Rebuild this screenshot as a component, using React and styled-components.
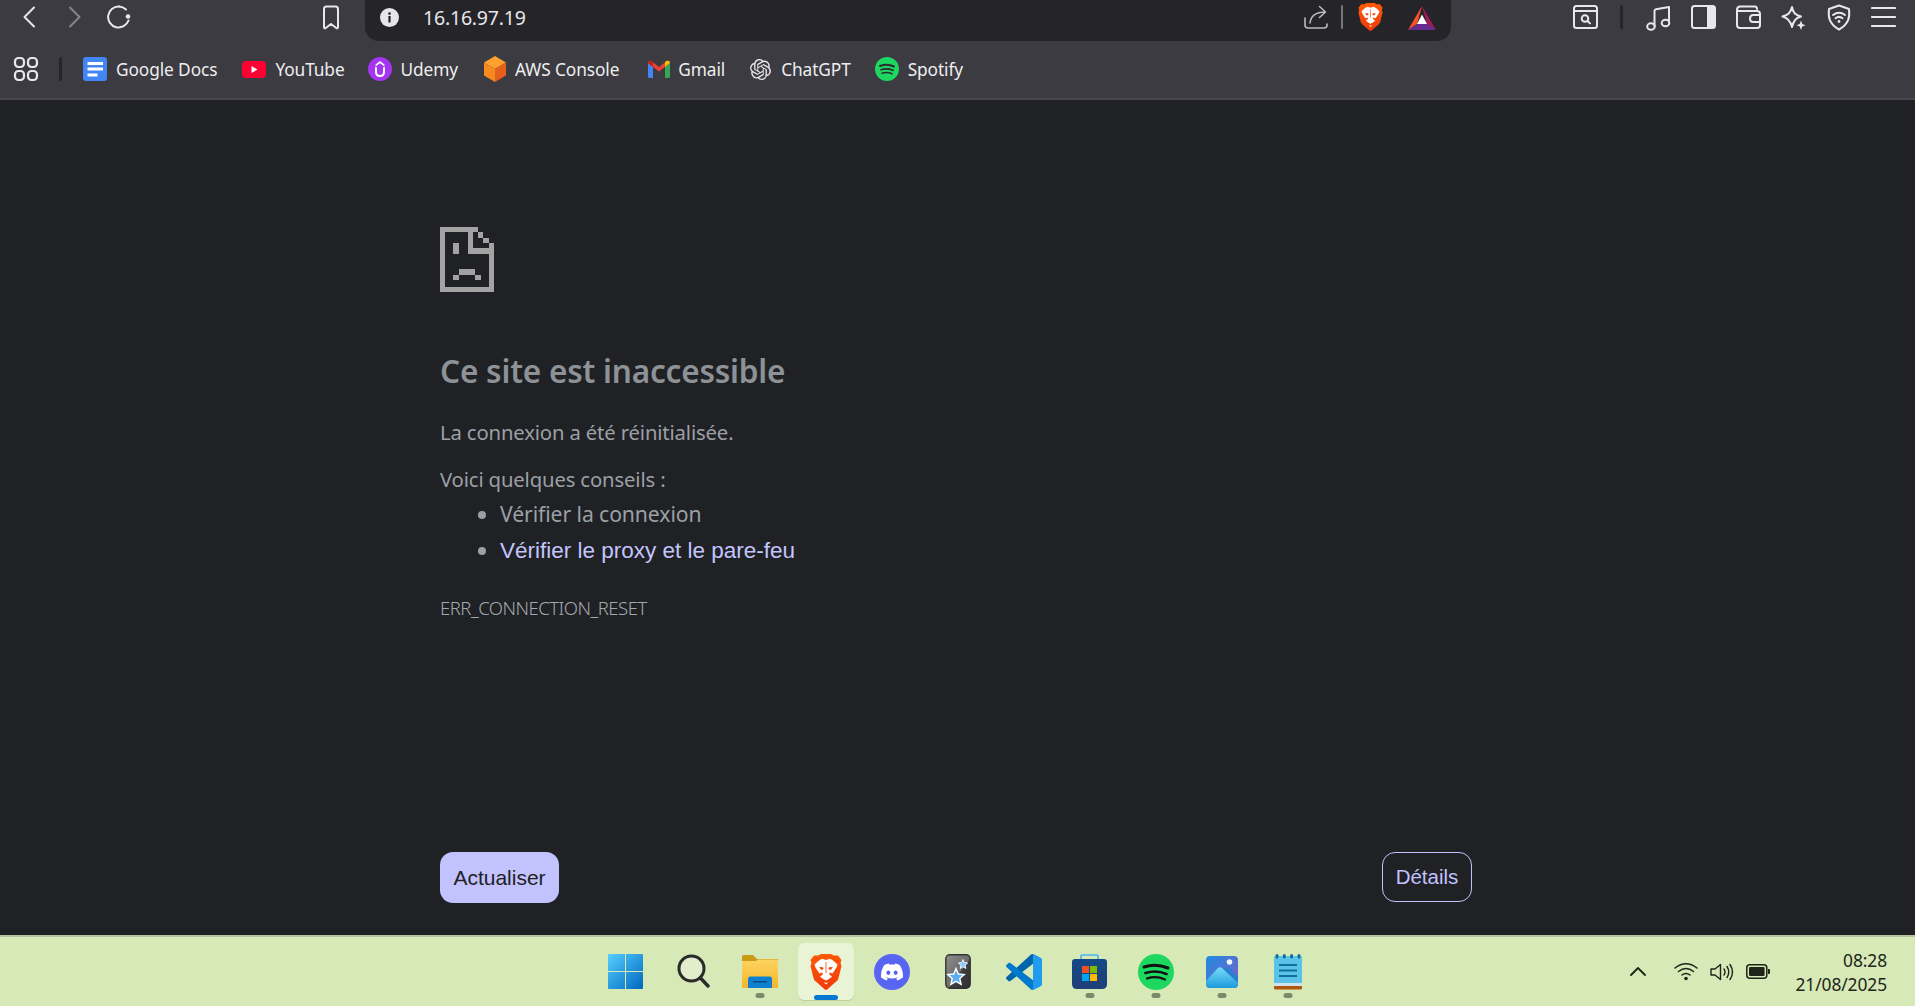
import React from "react";
import styled, { createGlobalStyle } from "styled-components";
import { SiOpenai, SiDiscord } from "react-icons/si";

const Global = createGlobalStyle`
  html, body { margin: 0; padding: 0; background: #202124; }
  * { box-sizing: border-box; }
`;

const UI = `"Noto Sans", "Open Sans", sans-serif`;

const Page = styled.div`
  width: 1915px; height: 1006px; overflow: hidden;
  display: flex; flex-direction: column;
  font-family: ${UI};
`;
const Header = styled.header`
  background: #3b3b41; height: 100px; flex: none;
  border-bottom: 2px solid #47474e;
  display: flex; flex-direction: column;
`;
const TopRow = styled.div`
  height: 41px; display: flex; align-items: center; flex: none;
`;
const Ico = styled.svg`
  flex: none; display: block;
  margin-left: ${p => p.$ml || 0}px;
  margin-top: ${p => p.$mt || 0}px;
  fill: none;
`;
const AddressBar = styled.div`
  margin-left: 25px; width: 1086px; height: 41px; flex: none;
  background: #242429; border-radius: 0 0 14px 14px;
  display: flex; align-items: center;
  padding: 0 15px;
`;
const Url = styled.span`
  margin-left: 24px; color: #e6e6ea; font-size: 19.5px; letter-spacing: -0.2px; margin-top: -7px;
`;
const Spacer = styled.div`flex: 1;`;
const Sep = styled.div`
  flex: none; width: ${p => p.$w || 3}px; height: 24px; border-radius: 2px;
  background: ${p => p.$c || "#25252b"};
  margin-left: ${p => p.$ml || 0}px;
  margin-top: ${p => p.$mt || 0}px;
`;
const BookmarkRow = styled.nav`
  height: 57px; display: flex; align-items: center; flex: none; padding-bottom: 5px; padding-top: 4px;
`;
const Bookmark = styled.a`
  display: flex; align-items: center; margin-left: ${p => p.$ml}px;
  color: #eeeef0; font-size: 17.3px; letter-spacing: -0.1px; white-space: nowrap;
`;
const BookmarkLabel = styled.span`margin-left: ${p => p.$ml}px; `;

const Main = styled.main`
  flex: 1; background: #202124; padding: 127px 0 32px 440px;
  display: flex; flex-direction: column;
  width: 100%;
`;
const Heading = styled.h1`
  margin: 58px 0 0; font-size: 31.5px; line-height: 42px; font-weight: 600; color: #8d9297; letter-spacing: -0.2px;
`;
const Para = styled.p`
  margin: ${p => p.$mt}px 0 0; font-size: 20.3px; line-height: 26px; font-weight: 400; color: #9aa0a6; letter-spacing: -0.15px;
`;
const Tips = styled.ul`
  margin: 4px 0 0; padding: 0 0 0 60px; list-style: disc; color: #9aa0a6; font-size: 21.2px; line-height: 36px; letter-spacing: -0.1px;
  li::marker { color: #9aa0a6; }
`;
const TipLink = styled.a`
  color: #c2c5ff; font-family: "Liberation Sans", Arial, sans-serif; font-size: 22.5px; letter-spacing: 0;
`;
const Code = styled.div`
  margin-top: 27px; font-size: 18.5px; line-height: 24px; font-weight: 300; color: #a3a9ae; letter-spacing: -0.5px;
`;
const Actions = styled.div`
  margin-top: auto; width: 1032px; display: flex; justify-content: space-between; align-items: flex-start;
`;
const Reload = styled.button`
  width: 119px; height: 51px; border: 0; border-radius: 13px; background: #c2c2ff;
  color: #202124; font: 400 21px "Liberation Sans", Arial, sans-serif; padding: 0;
`;
const DetailsBtn = styled.button`
  width: 90px; height: 50px; border: 1px solid #c2c2ff; border-radius: 13px; background: transparent;
  color: #c2c2ff; font: 400 20.5px "Liberation Sans", Arial, sans-serif; padding: 0;
`;
const Taskbar = styled.footer`
  height: 71px; flex: none; background: #d7e9b6; border-top: 2px solid #b6c1a0;
  display: grid; grid-template-columns: 1fr auto 1fr; 
`;
const TaskGroup = styled.div`
  grid-column: 2; display: flex; gap: 10px; padding-top: 6px; align-items: flex-start;
`;
const Tile = styled.div`
  position: relative; width: 56px; height: 57px; border-radius: 6px;
  display: flex; align-items: center; justify-content: center;
  background: ${p => p.$active ? "#e9f4d6" : "transparent"};
  box-shadow: ${p => p.$active ? "0 1px 1px rgba(0,0,0,.12)" : "none"};
`;
const RunDot = styled.span`
  position: absolute; bottom: 2px; left: 50%; transform: translateX(-50%);
  width: 9px; height: 5px; border-radius: 3px; background: #7c8a6c;
`;
const ActiveBar = styled.span`
  position: absolute; bottom: 0; left: 50%; transform: translateX(-50%);
  width: 24px; height: 5px; border-radius: 3px; background: #0078d4;
`;
const Tray = styled.div`
  grid-column: 3; display: flex; align-items: center; justify-content: flex-end; padding-right: 28px;
`;
const Clock = styled.div`
  margin-left: 25px; text-align: right; color: #1e241a; font-size: 17.4px; line-height: 24px; letter-spacing: -0.1px;
`;

const W = "#e8e8ec";
const s = { stroke: W, strokeWidth: 2, strokeLinecap: "round", strokeLinejoin: "round" };

const Brave = ({ size = 32, ml, mt, id = "brv" }) => (
  <Ico width={size} height={size * 36 / 32} viewBox="0 0 32 36" $ml={ml} $mt={mt}>
    <defs>
      <linearGradient id={id} x1="0" y1="0" x2="0" y2="1"><stop offset="0" stopColor="#ff5a05" /><stop offset="1" stopColor="#f03a0c" /></linearGradient>
    </defs>
    <path fill={`url(#${id})`} d="M8 1.5 L11 0 H21 L24 1.5 L28 1.5 L31.5 6 L30.5 9 L31.5 12 L28.5 24 C28 26 27 27 25.5 28 L17.5 35.2 Q16 36.2 14.5 35.2 L6.5 28 C5 27 4 26 3.5 24 L0.5 12 L1.5 9 L0.5 6 L4 1.5Z" />
    <path fill="#fff" d="M9 6.5 L12 4.8 L16 6 L20 4.8 L23 6.5 L27.5 10.5 L26.5 13.5 L22.5 19.5 L20 18.5 L19 20 L22 22.8 L18.5 25.2 L16 26.6 L13.5 25.2 L10 22.8 L13 20 L12 18.5 L9.5 19.5 L5.5 13.5 L4.5 10.5Z" />
    <path fill="#f4470a" d="M9 13 L13 13.2 L13.6 15 L11.4 16Z M23 13 L19 13.2 L18.4 15 L20.6 16Z M15.6 8 H16.4 V19 H15.6Z" />
    <path fill="#f4470a" d="M12.5 27 L16 28.4 L19.5 27 L16 31.8Z" />
    <path fill="#fff" d="M13.6 28 L16 29 L18.4 28 L16 30.6Z" />
  </Ico>
);
const Bat = () => (
  <Ico width={28} height={24} viewBox="0 0 28 24" $ml={25} $mt={-6}>
    <path fill="#ff4f24" d="M14 0 L0 24 L9 18Z" />
    <path fill="#a3195b" d="M14 0 L28 24 L19 18Z" />
    <path fill="#662d91" d="M0 24 H28 L19 18 H9Z" />
    <path fill="#fff" d="M14 8.5 L19 18 H9Z" />
  </Ico>
);
const Back = ({ c = W, ml, d }) => (
  <Ico width={14} height={22} viewBox="0 0 14 22" $ml={ml} $mt={-7}>
    <path d={d} stroke={c} strokeWidth="2" strokeLinecap="round" strokeLinejoin="round" />
  </Ico>
);
const ReloadIcon = () => (
  <Ico width={26} height={24} viewBox="0 0 26 24" $ml={24} $mt={-7}>
    <path {...s} d="M13 1.5 A10.5 10.5 0 1 0 22.5 15.5" />
    <path {...s} d="M13 1.5 A10.5 10.5 0 0 1 20 4.5" />
    <circle cx="22" cy="11.5" r="2.3" fill={W} />
  </Ico>
);
const BookmarkIcon = () => (
  <Ico width={18} height={25} viewBox="0 0 18 25" $ml={190} $mt={-7}>
    <path {...s} d="M2 4 Q2 1.5 4.5 1.5 H13.5 Q16 1.5 16 4 V22 Q16 24 14 22.8 L9 19 L4 22.8 Q2 24 2 22Z" />
  </Ico>
);
const Info = () => (
  <Ico width={19} height={19} viewBox="0 0 19 19" $mt={-7}>
    <circle cx="9.5" cy="9.5" r="9.5" fill="#e6e6ea" />
    <rect x="8.4" y="8" width="2.2" height="6.5" fill="#242429" />
    <circle cx="9.5" cy="5.6" r="1.3" fill="#242429" />
  </Ico>
);
const Share = () => (
  <Ico width={24} height={24} viewBox="0 0 24 24" $mt={-7}>
    <path stroke="#b9b9bf" strokeWidth="1.6" strokeLinecap="round" strokeLinejoin="round" d="M1 13 V20 Q1 23 4 23 H20 Q23 23 23 20 V19" />
    <path stroke="#b9b9bf" strokeWidth="1.6" strokeLinecap="round" strokeLinejoin="round" d="M6 18 C7 10 12 7 21 7 M15.5 1.5 L21.5 7 L15.5 12.5" />
  </Ico>
);
const ReaderIcon = () => (
  <Ico width={25} height={24} viewBox="0 0 25 24" $ml={122} $mt={-7}>
    <rect {...s} x="1" y="1" width="23" height="22" rx="2.5" />
    <path {...s} d="M1 6 H24" />
    <circle cx="12" cy="13.5" r="3.3" stroke={W} strokeWidth="2" />
    <path {...s} d="M14.8 16.2 L17 18.4" />
  </Ico>
);
const Music = () => (
  <Ico width={25} height={26} viewBox="0 0 25 26" $ml={23} $mt={-6}>
    <path {...s} d="M8.5 21 V6 Q8.5 4.5 10 4.2 L23 2 V17" />
    <ellipse {...s} cx="5" cy="21.5" rx="3.8" ry="3.2" />
    <ellipse {...s} cx="19.5" cy="18" rx="3.8" ry="3.2" />
  </Ico>
);
const Sidebar = () => (
  <Ico width={25} height={24} viewBox="0 0 25 24" $ml={20} $mt={-7}>
    <rect {...s} x="1" y="1" width="23" height="22" rx="2.5" />
    <path fill={W} d="M16 1 H21.5 Q24 1 24 3.5 V20.5 Q24 23 21.5 23 H16Z" />
  </Ico>
);
const Wallet = () => (
  <Ico width={25} height={24} viewBox="0 0 25 24" $ml={20} $mt={-7}>
    <path {...s} d="M1 5 Q1 1.5 4 1.5 H19 Q21 1.5 21 4 M1 5 V20 Q1 23 4 23 H21 Q24 23 24 20 V9 Q24 6 21 6 H3 Q1 6 1 4.5" />
    <path {...s} d="M24 10 H17 Q14 10 14 13.5 Q14 17 17 17 H24" />
  </Ico>
);
const Leo = () => (
  <Ico width={25} height={26} viewBox="0 0 25 26" $ml={20} $mt={-6}>
    <path {...s} d="M11 2 C12 8 14.5 10 20 11.5 C14.5 13 12.5 16 11 22 C9.5 16 7 13 1.5 11.5 C7 10 9.5 8 11 2Z" />
    <path fill={W} d="M20 15.5 L21.3 19 L24.5 20.3 L21.3 21.6 L20 25 L18.7 21.6 L15.5 20.3 L18.7 19Z" />
  </Ico>
);
const Vpn = () => (
  <Ico width={24} height={27} viewBox="0 0 24 27" $ml={21} $mt={-7}>
    <path {...s} d="M12 1.5 L22 5 C23 13 22 20 12 25.5 C2 20 1 13 2 5Z" />
    <path {...s} d="M6 11 Q12 6.5 18 11 M8.5 14.2 Q12 11.5 15.5 14.2" />
    <circle cx="12" cy="17.5" r="1.4" fill={W} />
  </Ico>
);
const Menu = () => (
  <Ico width={25} height={22} viewBox="0 0 25 22" $ml={20} $mt={-7}>
    <path stroke={W} strokeWidth="2.2" strokeLinecap="round" d="M1 2 H24 M1 11 H24 M1 20 H24" />
  </Ico>
);
const AppsGrid = () => (
  <Ico width={26} height={26} viewBox="0 0 26 26" $ml={13}>
    <g stroke={W} strokeWidth="2.2">
      <rect x="2" y="2" width="9" height="9" rx="3.5" />
      <rect x="15" y="2" width="9" height="9" rx="3.5" />
      <rect x="2" y="15" width="9" height="9" rx="3.5" />
      <rect x="15" y="15" width="9" height="9" rx="3.5" />
    </g>
  </Ico>
);
const Docs = () => (
  <Ico width={24} height={24} viewBox="0 0 24 24">
    <rect width="24" height="24" rx="3" fill="#4285f4" />
    <path fill="#fff" d="M4.5 5 H20 V8 H4.5Z M4.5 10.5 H20 V13.5 H4.5Z M4.5 16.5 H14.5 V19.5 H4.5Z" />
  </Ico>
);
const YouTube = () => (
  <Ico width={24} height={17} viewBox="0 0 24 17">
    <rect width="24" height="17" rx="4" fill="#ff0033" />
    <path fill="#fff" d="M9.5 5 L15.5 8.5 L9.5 12Z" />
  </Ico>
);
const Udemy = () => (
  <Ico width={24} height={24} viewBox="0 0 24 24">
    <circle cx="12" cy="12" r="12" fill="#a435f0" />
    <path stroke="#fff" strokeWidth="2" strokeLinecap="round" fill="none" d="M8 11 V15 Q8 19 12 19 Q16 19 16 15 V11" />
    <path fill="#fff" d="M12 4 L16.5 7.6 V9.4 L12 6.2 L7.5 9.4 V7.6Z" />
  </Ico>
);
const Aws = () => (
  <Ico width={24} height={26} viewBox="0 0 24 26">
    <path fill="#ffa02e" d="M12 0 L23 6.5 L12 13 L1 6.5Z" />
    <path fill="#f58a1f" d="M1 6.5 L12 13 V26 L1 19.5Z" />
    <path fill="#e5601c" d="M23 6.5 L12 13 V26 L23 19.5Z" />
  </Ico>
);
const Gmail = () => (
  <Ico width={22} height={18} viewBox="0 0 22 18">
    <path fill="#4285f4" d="M0 3 V16.5 Q0 18 1.5 18 H5 V7Z" />
    <path fill="#34a853" d="M22 3 V16.5 Q22 18 20.5 18 H17 V7Z" />
    <path fill="#ea4335" d="M0 3 Q0 0 3 0.8 L11 7 L19 0.8 L17 7 L11 11.5 L5 7 L0 3Z" />
    <path fill="#fbbc04" d="M17 7 V1.8 L19 0.8 Q22 0 22 3Z" />
    <path fill="#c5221f" d="M0 3 Q0 0 3 0.8 L5 2.2 V7Z" />
  </Ico>
);

const WinLogo = () => (
  <Ico width={35} height={35} viewBox="0 0 35 35" style={{ marginRight: 4 }}>
    <defs>
      <linearGradient id="win" x1="0" y1="0" x2="1" y2="1"><stop offset="0" stopColor="#55d0ff" /><stop offset="1" stopColor="#0067bf" /></linearGradient>
    </defs>
    <path fill="url(#win)" d="M1 0 H17 V17 H0 V1 Q0 0 1 0Z M18 0 H34 Q35 0 35 1 V17 H18Z M0 18 H17 V35 H1 Q0 35 0 34Z M18 18 H35 V34 Q35 35 34 35 H18Z" />
  </Ico>
);
const SearchIcon = () => (
  <Ico width={33} height={35} viewBox="0 0 33 35">
    <circle cx="14.5" cy="14.5" r="12.5" stroke="#2b2b2b" strokeWidth="3" fill="#e2edcc" />
    <path stroke="#2b2b2b" strokeWidth="3.4" strokeLinecap="round" d="M23.5 24 L31 32" />
  </Ico>
);
const Folder = () => (
  <Ico width={36} height={33} viewBox="0 0 36 33">
    <defs>
      <linearGradient id="fld" x1="0" y1="0" x2="0" y2="1"><stop offset="0" stopColor="#fcd462" /><stop offset="1" stopColor="#f6b52a" /></linearGradient>
    </defs>
    <path fill="#cb9a14" d="M0 2 Q0 0 2 0 H11 L15 4 H36 V12 H0Z" />
    <path fill="url(#fld)" d="M0 6 H14 L16 4.5 H35 Q36 4.5 36 6 V32 Q36 33 35 33 H1 Q0 33 0 32Z" />
    <path fill="#0f7fcf" d="M6 33 V24 Q6 21.5 8.5 21.5 H27.5 Q30 21.5 30 24 V33Z" />
    <rect x="11" y="26" width="14" height="1.6" fill="#0b4f8c" />
  </Ico>
);
const DiscordIcon = () => (
  <Ico width={36} height={36} viewBox="0 0 36 36">
    <circle cx="18" cy="18" r="18" fill="#5865f2" />
    <SiDiscord x="7" y="7" size="22" color="#fff" style={{ fill: "#fff" }} />
  </Ico>
);
const Anki = () => (
  <Ico width={26} height={35} viewBox="0 0 26 35">
    <defs>
      <linearGradient id="ank" x1="0" y1="0" x2="1" y2="1"><stop offset="0" stopColor="#8f8f8f" /><stop offset=".55" stopColor="#6b6b6b" /><stop offset=".56" stopColor="#3f3f3f" /><stop offset="1" stopColor="#2e2e2e" /></linearGradient>
    </defs>
    <rect x=".8" y=".8" width="24.4" height="33.4" rx="4" fill="url(#ank)" stroke="#333" strokeWidth="1.4" />
    <path fill="#8cc7f7" stroke="#e8f4ff" strokeWidth="1" d="M18 5.5 L19.3 8.6 L22.6 9 L20.1 11.2 L20.9 14.5 L18 12.7 L15.1 14.5 L15.9 11.2 L13.4 9 L16.7 8.6Z" />
    <path fill="#5aaef0" stroke="#fff" strokeWidth="1.4" d="M11 14.5 L13.3 20 L19.2 20.6 L14.8 24.5 L16.1 30.4 L11 27.3 L5.9 30.4 L7.2 24.5 L2.8 20.6 L8.7 20Z" />
  </Ico>
);
const VsCode = () => (
  <Ico width={36} height={36} viewBox="0 0 100 100">
    <path fill="#0065a9" d="M96.46 10.8 L75.86 .9 C73.47 -.25 70.62 .24 68.75 2.11 L1.3 63.6 C-.51 65.25 -.51 68.1 1.31 69.75 L6.82 74.76 C8.31 76.11 10.55 76.21 12.15 75 L93.36 13.37 C96.07 11.31 100 13.25 100 16.67 V16.43 C100 14.03 98.62 11.84 96.46 10.8Z" />
    <path fill="#007acc" d="M96.46 89.2 L75.86 99.1 C73.47 100.25 70.62 99.76 68.75 97.89 L1.3 36.4 C-.51 34.75 -.51 31.9 1.31 30.25 L6.82 25.24 C8.31 23.89 10.55 23.79 12.15 25 L93.36 86.63 C96.07 88.69 100 86.75 100 83.33 V83.57 C100 85.97 98.62 88.16 96.46 89.2Z" />
    <path fill="#1f9cf0" d="M75.86 99.13 C73.47 100.28 70.62 99.79 68.75 97.92 C71.06 100.23 75 98.59 75 95.33 V4.67 C75 1.41 71.06 -.23 68.75 2.08 C70.62 .21 73.47 -.28 75.86 .87 L96.46 10.78 C98.62 11.82 100 14.01 100 16.41 V83.59 C100 85.99 98.62 88.18 96.46 89.22Z" />
  </Ico>
);
const Store = () => (
  <Ico width={35} height={35} viewBox="0 0 35 35">
    <defs>
      <linearGradient id="sto" x1="0" y1="0" x2="0" y2="1"><stop offset="0" stopColor="#124a86" /><stop offset="1" stopColor="#1f3f78" /></linearGradient>
    </defs>
    <path stroke="#47b6ee" strokeWidth="1.6" d="M9 7 V2 Q9 1 10 1 H25 Q26 1 26 2 V7" />
    <path fill="url(#sto)" d="M0 8 Q0 5 3 5 H32 Q35 5 35 8 V30 Q35 35 30 35 H5 Q0 35 0 30Z" />
    <rect x="10" y="12" width="7" height="7" fill="#f25022" />
    <rect x="18" y="12" width="7" height="7" fill="#7fba00" />
    <rect x="10" y="20" width="7" height="7" fill="#00a4ef" />
    <rect x="18" y="20" width="7" height="7" fill="#ffb900" />
  </Ico>
);
const SpotifyIcon = () => (
  <Ico width={36} height={36} viewBox="0 0 36 36">
    <circle cx="18" cy="18" r="18" fill="#1ed760" />
    <path stroke="#111" strokeWidth="3" strokeLinecap="round" d="M6 13 Q18 9 30 14" />
    <path stroke="#111" strokeWidth="2.6" strokeLinecap="round" d="M7.5 19 Q18 15.5 28.5 20" />
    <path stroke="#111" strokeWidth="2.2" strokeLinecap="round" d="M9 24.5 Q18 21.5 27 25.5" />
  </Ico>
);
const Photos = () => (
  <Ico width={32} height={32} viewBox="0 0 32 32">
    <defs>
      <linearGradient id="pho" x1="0" y1="0" x2="1" y2="1"><stop offset="0" stopColor="#1f8ce0" /><stop offset="1" stopColor="#7f5cc9" /></linearGradient>
      <linearGradient id="mtn" x1="0" y1="0" x2="0" y2="1"><stop offset="0" stopColor="#7adcf8" /><stop offset="1" stopColor="#1d9bdc" /></linearGradient>
    </defs>
    <rect width="32" height="32" rx="4" fill="url(#pho)" />
    <circle cx="23.5" cy="6" r="2.8" fill="#f2f6ff" />
    <path fill="#2a7fd0" d="M17 13 L22 11.5 Q23 11.5 24 12.5 L32 21 V30Z" />
    <path fill="url(#mtn)" d="M0 25 L12 12 Q14 10.5 16 12 L32 27 V28 Q32 32 28 32 H4 Q0 32 0 28Z" />
  </Ico>
);
const Notepad = () => (
  <Ico width={28} height={36} viewBox="0 0 28 36">
    <rect y="2" width="28" height="31" rx="2" fill="#5cc3e8" />
    <rect y="29" width="28" height="3" fill="#cfe4ea" />
    <path fill="#b0560f" d="M0 32 H28 V34 Q28 35.5 26.5 35.5 H1.5 Q0 35.5 0 34Z" />
    <path stroke="#0f6f9f" strokeWidth="3" strokeLinecap="round" d="M3 1.5 V3 M10.3 1.5 V3 M17.6 1.5 V3 M25 1.5 V3" />
    <path stroke="#0f6f9f" strokeWidth="1.8" d="M5 11 H23 M5 16.5 H23 M5 22 H23" />
  </Ico>
);

const SadPage = () => (
  <Ico width={54} height={65} viewBox="30 20 162 195" shapeRendering="crispEdges">
    <path fill="#a3a3a3" d="M30 20 H145 V36 H46 V199 H176 V100 H113 V36 H130 V84 H192 V215 H30Z
      M145 36 H160 V52 H145Z M160 52 H176 V67 H160Z M176 67 H192 V84 H176Z
      M70 67 H87 V100 H70Z
      M87 147 H135 V163 H87Z M70 163 H87 V178 H70Z M135 163 H152 V178 H135Z" />
  </Ico>
);

const bookmarks = [
  { label: "Google Docs", ml: 21, lm: 9, Icon: Docs },
  { label: "YouTube", ml: 25, lm: 9, Icon: YouTube },
  { label: "Udemy", ml: 23, lm: 9, Icon: Udemy },
  { label: "AWS Console", ml: 25, lm: 8, Icon: Aws },
  { label: "Gmail", ml: 29, lm: 8, Icon: Gmail },
  { label: "ChatGPT", ml: 25, lm: 10, Icon: () => <Ico as={SiOpenai} size={21} style={{ color: "#e8e8ec", fill: "#e8e8ec" }} /> },
  { label: "Spotify", ml: 24, lm: 9, Icon: () => (
    <Ico width={24} height={24} viewBox="0 0 24 24">
      <circle cx="12" cy="12" r="12" fill="#1ed760" />
      <path stroke="#2a2a30" strokeWidth="2" strokeLinecap="round" d="M5 9 Q12 6.5 19 9.5" />
      <path stroke="#2a2a30" strokeWidth="1.7" strokeLinecap="round" d="M6 12.8 Q12 10.8 18 13.3" />
      <path stroke="#2a2a30" strokeWidth="1.5" strokeLinecap="round" d="M7 16.3 Q12 14.6 17 16.8" />
    </Ico>
  ) },
];

const taskItems = [
  { Icon: WinLogo }, { Icon: SearchIcon }, { Icon: Folder, dot: true },
  { Icon: () => <Brave size={32} id="brv2" />, active: true }, { Icon: DiscordIcon }, { Icon: Anki }, { Icon: VsCode },
  { Icon: Store, dot: true }, { Icon: SpotifyIcon, dot: true }, { Icon: Photos, dot: true }, { Icon: Notepad, dot: true },
];

export default function App() {
  return (
    <Page>
      <Global />
      <Header>
        <TopRow>
          <Back ml={22} d="M12 1.5 L2.5 11 L12 20.5" />
          <Back ml={32} c="#85858b" d="M2 1.5 L11.5 11 L2 20.5" />
          <ReloadIcon />
          <BookmarkIcon />
          <AddressBar>
            <Info />
            <Url>16.16.97.19</Url>
            <Spacer />
            <Share />
            <Sep $w={2} $ml={13} $c="#77777d" $mt={-7} />
            <Brave size={25} ml={15} mt={-7} />
            <Bat />
          </AddressBar>
          <ReaderIcon />
          <Sep $ml={22} $mt={-7} />
          <Music />
          <Sidebar />
          <Wallet />
          <Leo />
          <Vpn />
          <Menu />
        </TopRow>
        <BookmarkRow>
          <AppsGrid />
          <Sep $ml={20} />
          {bookmarks.map(({ label, ml, lm, Icon }) => (
            <Bookmark key={label} $ml={ml}>
              <Icon />
              <BookmarkLabel $ml={lm}>{label}</BookmarkLabel>
            </Bookmark>
          ))}
        </BookmarkRow>
      </Header>
      <Main>
        <SadPage />
        <Heading>Ce site est inaccessible</Heading>
        <Para $mt={27}>La connexion a été réinitialisée.</Para>
        <Para $mt={21}>Voici quelques conseils :</Para>
        <Tips>
          <li>Vérifier la connexion</li>
          <li><TipLink>Vérifier le proxy et le pare-feu</TipLink></li>
        </Tips>
        <Code>ERR_CONNECTION_RESET</Code>
        <Actions>
          <Reload>Actualiser</Reload>
          <DetailsBtn>Détails</DetailsBtn>
        </Actions>
      </Main>
      <Taskbar>
        <TaskGroup>
          {taskItems.map(({ Icon, dot, active }, i) => (
            <Tile key={i} $active={active}>
              <Icon />
              {dot && <RunDot />}
              {active && <ActiveBar />}
            </Tile>
          ))}
        </TaskGroup>
        <Tray>
          <Ico width={16} height={9} viewBox="0 0 16 9">
            <path stroke="#1e241a" strokeWidth="1.8" strokeLinecap="round" strokeLinejoin="round" d="M1 8 L8 1 L15 8" />
          </Ico>
          <Ico width={24} height={19} viewBox="0 0 24 19" $ml={28}>
            <path stroke="#1e241a" strokeWidth="1.5" strokeLinecap="round" d="M1 6 Q12 -2.5 23 6 M4.5 9.5 Q12 3.5 19.5 9.5 M8 13 Q12 9.8 16 13" />
            <circle cx="12" cy="16.5" r="1.8" fill="#1e241a" />
          </Ico>
          <Ico width={24} height={18} viewBox="0 0 24 18" $ml={12}>
            <path stroke="#1e241a" strokeWidth="1.4" strokeLinejoin="round" d="M1 6 H5 L10.5 1.5 V16.5 L5 12 H1Z" />
            <path stroke="#1e241a" strokeWidth="1.4" strokeLinecap="round" d="M14 6 Q16 9 14 12 M17 3.5 Q20.5 9 17 14.5 M20 1.5 Q25 9 20 16.5" />
          </Ico>
          <Ico width={24} height={15} viewBox="0 0 24 15" $ml={12}>
            <rect x=".8" y=".8" width="20" height="13.4" rx="3" stroke="#1e241a" strokeWidth="1.5" />
            <rect x="3" y="3" width="15.6" height="9" rx="1.2" fill="#1e241a" />
            <path fill="#1e241a" d="M22 5 H23 Q24 5 24 6 V9 Q24 10 23 10 H22Z" />
          </Ico>
          <Clock>08:28<br />21/08/2025</Clock>
        </Tray>
      </Taskbar>
    </Page>
  );
}
